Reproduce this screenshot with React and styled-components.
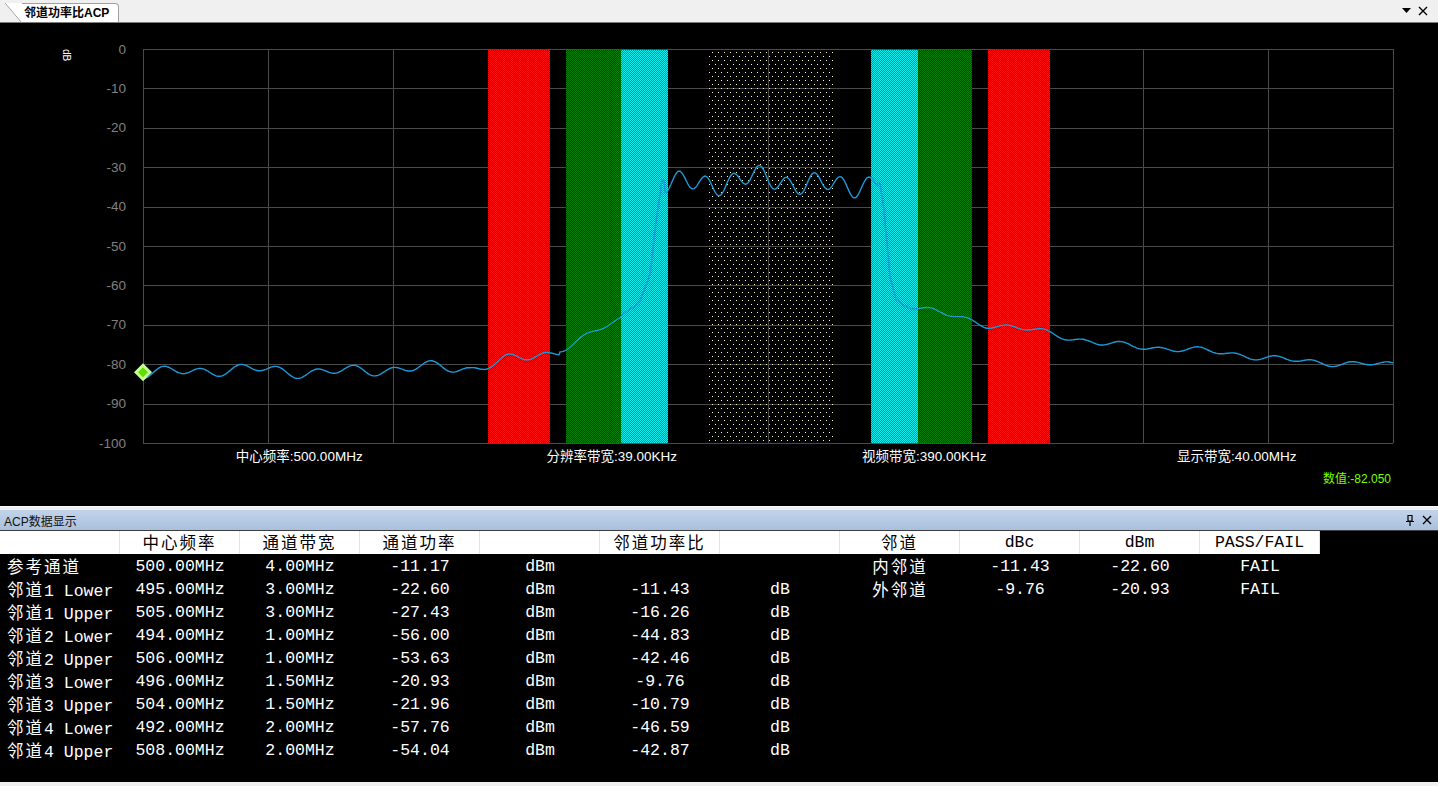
import React from 'react'
import styled, { createGlobalStyle } from 'styled-components'

const GlobalStyle = createGlobalStyle`
  html, body { margin: 0; padding: 0; background: #f0f0f0; }
  body {
    font-family: "Liberation Sans", "Noto Sans CJK SC", sans-serif;
    overflow: hidden;
  }
`

// plot geometry (chart panel coordinates)
const PL = 143
const PR = 1393
const PT = 26
const PB = 420
const yOf = (db) => PT + (-db) * ((PB - PT) / 100)

const baseline = [
  [143, -82], [470, -81.2], [490, -79.5], [550, -77], [566, -75.5], [620, -69],
  [640, -63.5], [650, -57], [656, -44], [662, -33.5], [880, -34], [884, -41],
  [890, -58], [896, -63.5], [920, -65.5], [985, -70], [1050, -72.2], [1100, -74.5],
  [1200, -76.8], [1300, -79], [1393, -80.5],
]

const base = (x) => {
  for (let i = 0; i < baseline.length - 1; i++) {
    const [x0, y0] = baseline[i]
    const [x1, y1] = baseline[i + 1]
    if (x >= x0 && x <= x1) return y0 + (y1 - y0) * (x - x0) / (x1 - x0)
  }
  return -80.5
}

const level = (x) => {
  const slow = Math.sin(x / 6.1) * 0.9 + Math.sin(x / 13.7 + 1.7) * 0.7 + Math.sin(x / 31 + 0.4) * 0.4
  if (x > 664 && x < 878) {
    return base(x) + Math.sin(x / 4.3 + 0.8) * 2.2 + Math.sin(x / 11 + 2.1) * 1.3 + Math.sin(x / 23) * 0.8
  }
  if (x >= 640 && x <= 664) return base(x) + slow * 0.3
  if (x >= 878 && x <= 900) return base(x) + slow * 0.3
  if (x < 560) return base(x) + slow * 1.1
  return base(x) + slow * 0.6
}

const tracePoints = () => {
  const pts = []
  for (let x = PL; x <= PR; x += 1) pts.push(`${x},${yOf(level(x)).toFixed(1)}`)
  return pts.join(' ')
}

const bands = [
  { x: 488, w: 62, fill: 'url(#redDither)' },
  { x: 566, w: 55, fill: 'url(#greenDither)' },
  { x: 621, w: 47, fill: 'url(#cyanDither)' },
  { x: 707, w: 126, fill: 'url(#dots)' },
  { x: 871, w: 47, fill: 'url(#cyanDither)' },
  { x: 918, w: 54, fill: 'url(#greenDither)' },
  { x: 988, w: 62, fill: 'url(#redDither)' },
]

const axisLabels = ['中心频率:500.00MHz', '分辨率带宽:39.00KHz', '视频带宽:390.00KHz', '显示带宽:40.00MHz']

const leftHead = ['', '中心频率', '通道带宽', '通道功率', '', '邻道功率比', '']
const leftRows = [
  ['参考通道', '500.00MHz', '4.00MHz', '-11.17', 'dBm', '', ''],
  ['邻道1 Lower', '495.00MHz', '3.00MHz', '-22.60', 'dBm', '-11.43', 'dB'],
  ['邻道1 Upper', '505.00MHz', '3.00MHz', '-27.43', 'dBm', '-16.26', 'dB'],
  ['邻道2 Lower', '494.00MHz', '1.00MHz', '-56.00', 'dBm', '-44.83', 'dB'],
  ['邻道2 Upper', '506.00MHz', '1.00MHz', '-53.63', 'dBm', '-42.46', 'dB'],
  ['邻道3 Lower', '496.00MHz', '1.50MHz', '-20.93', 'dBm', '-9.76', 'dB'],
  ['邻道3 Upper', '504.00MHz', '1.50MHz', '-21.96', 'dBm', '-10.79', 'dB'],
  ['邻道4 Lower', '492.00MHz', '2.00MHz', '-57.76', 'dBm', '-46.59', 'dB'],
  ['邻道4 Upper', '508.00MHz', '2.00MHz', '-54.04', 'dBm', '-42.87', 'dB'],
]
const rightHead = ['邻道', 'dBc', 'dBm', 'PASS/FAIL']
const rightRows = [
  ['内邻道', '-11.43', '-22.60', 'FAIL'],
  ['外邻道', '-9.76', '-20.93', 'FAIL'],
]

const Mixed = ({ text }) => {
  const runs = text.match(/[\u3400-\u9fff]+|[^\u3400-\u9fff]+/g) || []
  return runs.map((r, i) => (/[\u3400-\u9fff]/.test(r) ? <Cjk key={i}>{r}</Cjk> : <span key={i}>{r}</span>))
}

const Spectrum = () => {
  const markerY = yOf(-82.05)
  return (
    <svg width="1438" height="426" style={{ display: 'block' }} shapeRendering="crispEdges">
      <defs>
        <pattern id="redDither" width="2" height="2" patternUnits="userSpaceOnUse">
          <rect width="2" height="2" fill="#ff0a0a" />
          <rect width="1" height="1" fill="#b80000" />
          <rect x="1" y="1" width="1" height="1" fill="#b80000" />
        </pattern>
        <pattern id="greenDither" width="2" height="2" patternUnits="userSpaceOnUse">
          <rect width="2" height="2" fill="#008000" />
          <rect width="1" height="1" fill="#003a00" />
          <rect x="1" y="1" width="1" height="1" fill="#003a00" />
        </pattern>
        <pattern id="cyanDither" width="2" height="2" patternUnits="userSpaceOnUse">
          <rect width="2" height="2" fill="#10f0f0" />
          <rect width="1" height="1" fill="#008c94" />
          <rect x="1" y="1" width="1" height="1" fill="#008c94" />
        </pattern>
        <pattern id="dots" width="6" height="8" patternUnits="userSpaceOnUse">
          <rect x="1" y="1" width="1" height="1" fill="#ffffb8" />
          <rect x="4" y="5" width="1" height="1" fill="#ffffb8" />
        </pattern>
      </defs>

      <text x="63" y="32" fill="#ffffff" fontSize="10" transform="rotate(90 63 32)" textAnchor="middle">dB</text>

      {Array.from({ length: 11 }, (_, i) => (
        <text key={'l' + i} x="126" y={PT + i * 39.4 + 4.5} fill="#808080" fontSize="13.5" textAnchor="end">
          {i === 0 ? '0' : `-${i * 10}`}
        </text>
      ))}

      {Array.from({ length: 11 }, (_, i) => (
        <line key={'h' + i} x1={PL} x2={PR} y1={Math.round(PT + i * 39.4) + 0.5} y2={Math.round(PT + i * 39.4) + 0.5} stroke="#4a4a4a" />
      ))}
      {Array.from({ length: 11 }, (_, i) => (
        <line key={'v' + i} x1={PL + i * 125 + 0.5} x2={PL + i * 125 + 0.5} y1={PT} y2={PB} stroke="#4a4a4a" />
      ))}

      {bands.map((b, i) => (
        <rect key={'b' + i} x={b.x} y={PT + 1} width={b.w} height={PB - PT - 1} fill={b.fill} />
      ))}

      <polyline points={tracePoints()} fill="none" stroke="#1c98d6" strokeWidth="1.4" shapeRendering="auto" />

      <polygon points={`${PL},${markerY - 9} ${PL + 9},${markerY} ${PL},${markerY + 9} ${PL - 9},${markerY}`} fill="#c8ff9a" shapeRendering="auto" />
      <polygon points={`${PL},${markerY - 5} ${PL + 5},${markerY} ${PL},${markerY + 5} ${PL - 5},${markerY}`} fill="#5fe000" shapeRendering="auto" />
    </svg>
  )
}

const App = () => {
  return (
    <Page>
      <GlobalStyle />
      <TabBar>
        <Tab>邻道功率比ACP</Tab>
        <TabTools>
          <svg width="9" height="6" viewBox="0 0 9 6"><path d="M0 0 H9 L4.5 5 Z" fill="#000" /></svg>
          <svg width="10" height="10" viewBox="0 0 10 10"><path d="M1 1 L9 9 M9 1 L1 9" stroke="#000" strokeWidth="1.4" /></svg>
        </TabTools>
      </TabBar>

      <ChartPanel>
        <Spectrum />
        <AxisRow>
          {axisLabels.map((t) => <AxisLabel key={t}>{t}</AxisLabel>)}
        </AxisRow>
        <Readout>数值:-82.050</Readout>
      </ChartPanel>

      <Splitter />

      <DockHeader>
        <span>ACP数据显示</span>
        <TabTools>
          <svg width="10" height="12" viewBox="0 0 10 12">
            <path d="M3 1.5 H7 V7 H3 Z M1 7.5 H9 M5 7.5 V12" stroke="#000" strokeWidth="1.2" fill="none" />
          </svg>
          <svg width="10" height="10" viewBox="0 0 10 10"><path d="M1 1 L9 9 M9 1 L1 9" stroke="#000" strokeWidth="1.4" /></svg>
        </TabTools>
      </DockHeader>

      <DataArea>
        <Grid $cols={7}>
          {leftHead.map((h, i) => <HeadCell key={'lh' + i}><Mixed text={h} /></HeadCell>)}
          {leftRows.map((r, ri) => r.map((c, ci) => (
            <Cell key={ri + '-' + ci} $first={ci === 0}><Mixed text={c} /></Cell>
          )))}
        </Grid>
        <Grid $cols={4}>
          {rightHead.map((h, i) => <HeadCell key={'rh' + i}><Mixed text={h} /></HeadCell>)}
          {rightRows.map((r, ri) => r.map((c, ci) => (
            <Cell key={ri + '-' + ci}><Mixed text={c} /></Cell>
          )))}
        </Grid>
      </DataArea>
      <BottomEdge />
    </Page>
  )
}

const Page = styled.div`
  width: 1438px;
  height: 786px;
  display: flex;
  flex-direction: column;
  background: #f0f0f0;
`

const TabBar = styled.div`
  height: 22px;
  flex: none;
  display: flex;
  align-items: flex-end;
  justify-content: space-between;
  padding: 0 10px 0 22px;
  border-bottom: 1px solid #7d7d7d;
  background: #f0f0f0;
`

const Tab = styled.div`
  position: relative;
  height: 18px;
  line-height: 18px;
  padding: 0 9px 0 2px;
  background: #fff;
  border: 1px solid #a0a0a0;
  border-bottom: none;
  border-left: none;
  border-radius: 0 4px 0 0;
  font-size: 12px;
  font-weight: bold;
  color: #000;
  &::before {
    content: '';
    position: absolute;
    left: -17px;
    top: -1px;
    width: 17px;
    height: 20px;
    background: linear-gradient(to top right, transparent calc(50% - 0.7px), #a0a0a0 50%, #fff calc(50% + 0.7px));
  }
`

const TabTools = styled.div`
  display: flex;
  align-items: center;
  gap: 7px;
  align-self: center;
`

const ChartPanel = styled.div`
  height: 483px;
  flex: none;
  background: #000;
  display: flex;
  flex-direction: column;
`

const AxisRow = styled.div`
  display: flex;
  width: 1250px;
  margin-left: 143px;
  height: 16px;
  line-height: 16px;
`

const AxisLabel = styled.div`
  flex: 1;
  text-align: center;
  color: #fff;
  font-size: 13.5px;
`

const Readout = styled.div`
  height: 20px;
  line-height: 20px;
  margin-top: 4px;
  padding-right: 47px;
  text-align: right;
  color: #7cfc00;
  font-size: 12px;
`

const Splitter = styled.div`
  height: 4px;
  flex: none;
  background: #f0f0f0;
  border-top: 1px solid #fafafa;
  box-sizing: border-box;
`

const DockHeader = styled.div`
  height: 20px;
  flex: none;
  display: flex;
  align-items: center;
  justify-content: space-between;
  padding: 0 6px 0 4px;
  background: linear-gradient(#c3d4ea, #a9c0dd);
  border-bottom: 1px solid #3e3e3e;
  font-size: 12px;
  color: #101010;
`

const DataArea = styled.div`
  flex: 1;
  background: #000;
  display: flex;
  align-items: flex-start;
`

const Grid = styled.div`
  display: grid;
  grid-template-columns: repeat(${(p) => p.$cols}, 120px);
  grid-auto-rows: 23px;
  font-family: "Liberation Mono", "Noto Sans CJK SC", monospace;
  font-size: 16.5px;
`

const Cjk = styled.span`
  font-family: "Noto Sans CJK SC", sans-serif;
  letter-spacing: 2px;
`

const HeadCell = styled.div`
  background: #fff;
  border-right: 1px solid #e3e3e3;
  color: #000;
  text-align: center;
  line-height: 23px;
  white-space: nowrap;
`

const Cell = styled.div`
  color: #fff;
  padding-top: 2px;
  line-height: 21px;
  white-space: nowrap;
  text-align: ${(p) => (p.$first ? 'left' : 'center')};
  padding-left: ${(p) => (p.$first ? '7px' : '0')};
`

const BottomEdge = styled.div`
  height: 4px;
  flex: none;
  background: #f0f0f0;
`

export default App
